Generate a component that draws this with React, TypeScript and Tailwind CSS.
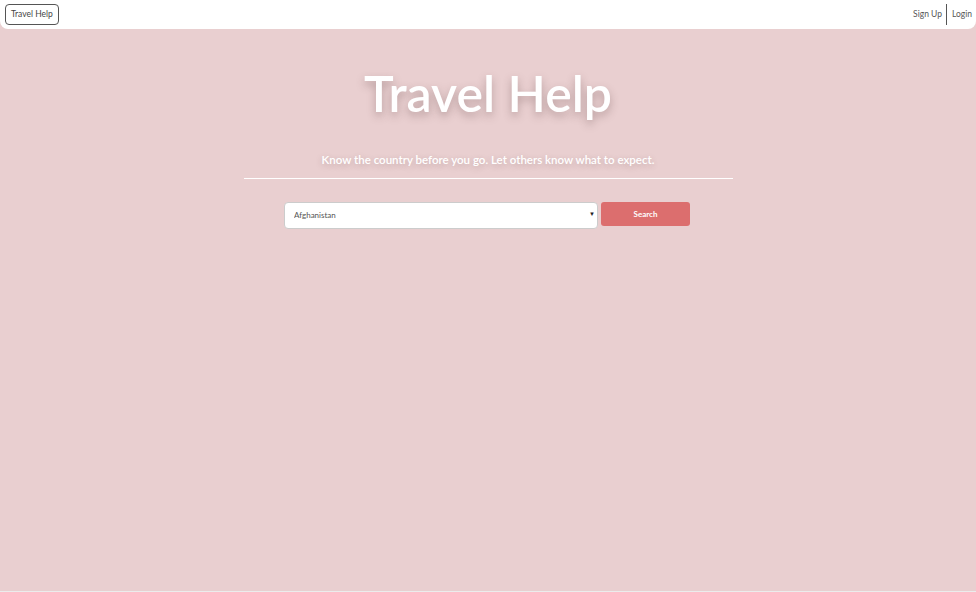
import { useState } from "react";

const countries: string[] = ["Afghanistan", "Albania", "Algeria", "Andorra", "Angola", "Argentina", "Armenia", "Australia", "Austria"];

const App: React.FC = () => {
    const [country, setCountry] = useState<string>("Afghanistan");

    return (
        <div className="min-h-[592px] bg-[#ececec] font-['Lato','Noto_Sans',sans-serif]">
            <div className="h-[591px] bg-[#e9cfd0] flex flex-col">
                <nav className="h-[29px] bg-white rounded-b-lg flex items-center justify-between pl-[5px] pr-[4px]">
                    <button className="h-[21px] px-[5px] border border-[#555] rounded-[4px] text-[8.5px] text-[#444] leading-none">Travel Help</button>
                    <div className="flex items-center text-[8.5px] text-[#555]">
                        <span className="pr-[4px]">Sign Up</span>
                        <span className="w-px h-[21px] bg-[#555]"></span>
                        <span className="pl-[5px]">Login</span>
                    </div>
                </nav>
                <div className="flex flex-col items-center">
                    <h1 className="mt-[39px] text-[50px] leading-none font-semibold text-white [text-shadow:0_4px_8px_rgba(90,60,60,0.35)]">Travel Help</h1>
                    <p className="mt-[33px] text-[11.5px] font-semibold text-white [text-shadow:0_2px_6px_rgba(90,60,60,0.25)]">Know the country before you go. Let others know what to expect.</p>
                    <div className="mt-[10px] w-[489px] h-px bg-white"></div>
                    <div className="mt-[21px] flex items-center gap-[3px] pr-[2px]">
                        <div className="relative w-[314px] h-[27px]">
                            <select
                                value={country}
                                onChange={(e: React.ChangeEvent<HTMLSelectElement>) => setCountry(e.target.value)}
                                className="appearance-none w-full h-full bg-white border border-[#ccc] rounded-[4px] pl-[9px] text-[8px] text-[#555] outline-none"
                            >
                                {countries.map((c) => <option key={c} value={c}>{c}</option>)}
                            </select>
                            <span className="absolute right-[3px] top-[9px] text-[6px] text-[#222] pointer-events-none">▼</span>
                        </div>
                        <button className="w-[89px] h-[24px] bg-[#dc6e6e] rounded-[3px] text-white text-[8px] font-bold">Search</button>
                    </div>
                </div>
            </div>
        </div>
    );
};

export default App;
